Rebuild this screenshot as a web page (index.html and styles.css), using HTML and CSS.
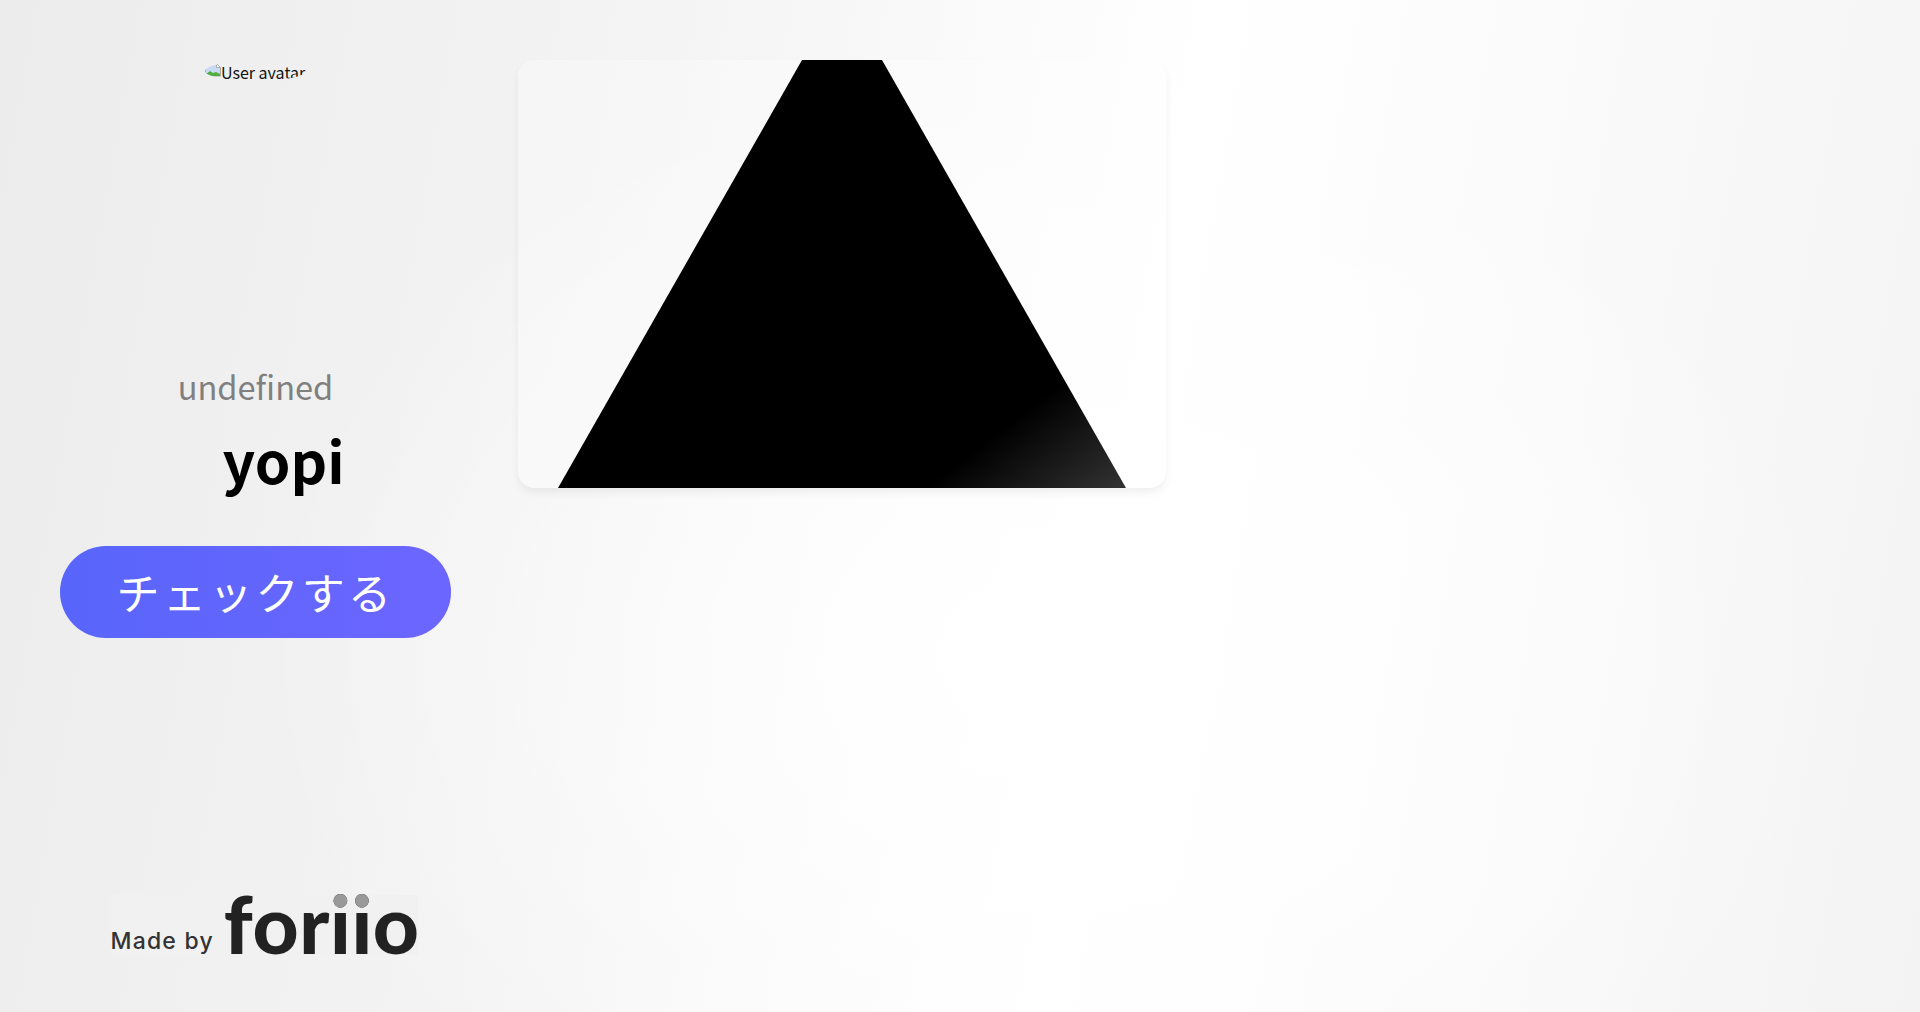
FILE: index.html
```html
<!DOCTYPE html>
<html>
<head>
    <title>yopi</title>
    <link rel="stylesheet" href="styles.css">
</head>
<body>
    <div class="page">
        <aside class="profile">
            <div class="avatar">
                <svg class="broken-icon" width="16" height="16" viewBox="0 0 16 16">
                    <path d="M.5.5h11l4 4v8.5H.5z" fill="#c9daf6" stroke="#a9a9a9"/>
                    <path d="M1 13V11l4-3 3 2 3-1 4 2v2z" fill="#4fae3c"/>
                    <path d="M11.5.5v4h4z" fill="#fff" stroke="#a9a9a9"/>
                </svg>
                <span>User avatar</span>
            </div>
            <div class="job">undefined</div>
            <div class="name">yopi</div>
            <button class="check-button">チェックする</button>
            <div class="made-by">
                <span class="made-by-text">Made by</span>
                <span class="logo">foriio</span>
            </div>
        </aside>
        <main class="works">
            <div class="work-card">
                <svg class="work-image" width="648" height="428" viewBox="0 0 648 428">
                    <defs>
                        <linearGradient id="shine" gradientUnits="userSpaceOnUse" x1="407" y1="428" x2="481" y2="525">
                            <stop offset="0" stop-color="#000"/>
                            <stop offset="1" stop-color="#333"/>
                        </linearGradient>
                    </defs>
                    <polygon points="284,0 364,0 608,428 40,428" fill="url(#shine)"/>
                </svg>
            </div>
        </main>
    </div>
</body>
</html>
```

FILE: styles.css
```css
html, body {
    margin: 0;
    height: 100%;
}
body {
    font-family: "Noto Sans CJK JP", "Noto Sans", sans-serif;
    overflow: hidden;
    background:
        radial-gradient(ellipse 800px 600px at 55% 65%, #fff 0%, rgba(255,255,255,0) 100%),
        linear-gradient(100deg, #ececec 0%, #f4f4f4 32%, #fff 58%, #fdfdfd 66%, #f3f3f3 100%);
}
.page {
    display: flex;
    height: 100%;
}
.profile {
    width: 391px;
    margin-left: 60px;
    flex-shrink: 0;
    display: flex;
    flex-direction: column;
    align-items: center;
}
.avatar {
    margin-top: 61px;
    width: 101px;
    height: 20px;
    border-radius: 50%;
    overflow: hidden;
    display: flex;
    font-size: 16px;
    line-height: 22px;
    white-space: nowrap;
    color: #111;
}
.broken-icon {
    flex-shrink: 0;
    margin-top: 2px;
}
.job {
    margin-top: 280px;
    font-size: 32.6px;
    line-height: 50px;
    color: #808080;
}
.name {
    margin-top: 8px;
    margin-left: 56px;
    font-size: 57px;
    line-height: 80px;
    font-weight: 700;
    color: #000;
}
.check-button {
    margin-top: 47px;
    width: 391px;
    height: 92px;
    padding: 0 0 2px;
    border: none;
    border-radius: 46px;
    background: linear-gradient(90deg, #5865fa, #6c66ff);
    color: #fff;
    font-family: inherit;
    font-size: 43px;
    font-weight: 400;
    letter-spacing: 3.3px;
    cursor: pointer;
}
.made-by {
    margin-top: auto;
    margin-bottom: 57px;
    margin-left: 17px;
    width: 307px;
    height: 60px;
    display: flex;
    align-items: flex-end;
    gap: 10px;
    background: #f1f1f1;
}
.made-by-text {
    font-family: Inter, sans-serif;
    font-size: 23px;
    line-height: 28px;
    font-weight: 500;
    letter-spacing: 1.2px;
    color: #333;
    white-space: nowrap;
}
.logo {
    font-family: Lato, sans-serif;
    font-size: 80px;
    line-height: 56px;
    padding-top: 6px;
    padding-bottom: 4px;
    font-weight: 900;
    letter-spacing: 0.6px;
    color: #222;
    /* grey dots on the two i's */
    background:
        linear-gradient(#999, #999) 45px 0 / 130px 24px no-repeat,
        linear-gradient(#222, #222);
    -webkit-background-clip: text;
    background-clip: text;
    -webkit-text-fill-color: transparent;
}
.works {
    margin-left: 67px;
    padding-top: 60px;
}
.work-card {
    width: 648px;
    height: 428px;
    background: rgba(255,255,255,0.3);
    border-radius: 16px;
    box-shadow: 0 5px 10px -1px rgba(0,0,0,0.07);
    overflow: hidden;
}
.work-image {
    display: block;
}
```
